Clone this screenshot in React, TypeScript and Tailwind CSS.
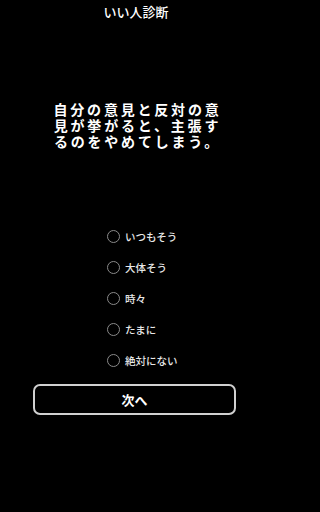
import React from "react";

const options = ["いつもそう", "大体そう", "時々", "たまに", "絶対にない"];

export default function App() {
  return (
    <div
      className="min-h-screen w-full bg-black text-white"
      style={{ fontFamily: '"Noto Sans CJK JP", "Noto Sans", sans-serif' }}
    >
      <div className="w-[272px] h-[512px] flex flex-col">
        <div className="mt-[5px] h-[14px] text-[13px] leading-[14px] text-center font-medium">
          いい人診断
        </div>
        <div className="mt-[82px] pl-[3px] text-[14px] leading-[16px] tracking-[2.8px] font-bold text-center">
          自分の意見と反対の意
          <br />
          見が挙がると、主張す
          <br />
          るのをやめてしまう。
        </div>
        <div className="mt-[72px] flex flex-col pl-[107px]">
          {options.map((o) => (
            <div key={o} className="h-[31px] flex items-center gap-[5px]">
              <span className="w-[13px] h-[13px] rounded-full border-[1.5px] border-[#8a8a8a]" />
              <span className="text-[10.5px] leading-[12px] font-medium text-[#e8e8e8]">{o}</span>
            </div>
          ))}
        </div>
        <button className="mt-[8px] ml-[33px] w-[203px] h-[31px] rounded-[7px] border-2 border-[#d0d0d0] bg-black text-white text-[13px] font-bold flex items-center justify-center">
          次へ
        </button>
      </div>
    </div>
  );
}
